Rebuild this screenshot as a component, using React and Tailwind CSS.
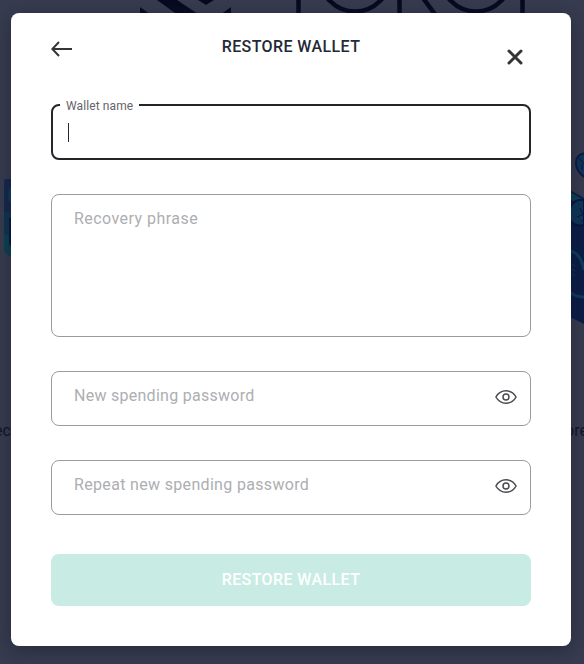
function Backdrop() {
  return (
    <svg className="absolute inset-0" width="584" height="664" viewBox="0 0 584 664" aria-hidden="true">
      <g fill="#060a20">
        <path d="M140 7 L149 13.500H140Z M157 0 H177 L204 18 H182Z M198 0 H214 L206 5Z M231 7 V13.500H222Z" />
      </g>
      <g fill="none" stroke="#060a20" strokeWidth="4.500">
        <path d="M298.500 0V14M399.500 0V14M423 -2 L435.500 15M522.500 0V14" />
        <circle cx="355" cy="-23.500" r="35" />
        <circle cx="476" cy="-23.500" r="35" />
      </g>
      <path d="M4 181q0-2 2-2h6v78q-8-3-8-11z" fill="#14284f" />
      <path d="M4 212h8v45q-8-3-8-11z" fill="#0f3550" />
      <path d="M12 185q-4 5-4 10t4 10z" fill="#0f3d58" />
      <path d="M4 235v11q0 8 8 11v-8q-3-3-3-14z" fill="#0b4352" />
      <path d="M12 218h-3v26l3 4z" fill="#071544" />
      <path d="M570 190l14 8v126l-14-7z" fill="#0a1d48" />
      <path d="M570 192l14 8v7l-14-8z" fill="#0b4352" />
      <path d="M586 153q-10 1-10 10t10 15z" fill="#10365a" stroke="#0a1a4a" strokeWidth="2" />
      <path d="M570 208q3-7 9-8h5v25q-9 2-14-5z" fill="#0e3658" stroke="#071544" strokeWidth="2" />
      <path d="M579 158l5 6m-2 0v6M580 208l4 9m-7 0 7-3m-3 8 3-3" stroke="#071544" fill="none" />
      <path d="M570 251q11 2 14 19M570 292q5 5 14 5" stroke="#0e3c5c" strokeWidth="3" fill="none" />
      <path d="M572 264l3 2m-3 3 3 2m-3 3 3 2" stroke="#0e3c5c" fill="none" />
    </svg>
  );
}

function Eye() {
  return (
    <svg width="22" height="14" viewBox="0 0 22 14" fill="none" stroke="#4a494d" strokeWidth="1.500">
      <path d="M.9 7C3.200 3 6.900.8 11 .8S18.800 3 21.100 7C18.800 11 15.100 13.200 11 13.200S3.200 11 .9 7Z" strokeLinejoin="round" />
      <circle cx="11" cy="7" r="3" />
    </svg>
  );
}

function PasswordField({ children }) {
  return (
    <div className="flex h-[55px] items-center justify-between rounded-lg border border-[#9b9b9d] pl-[22px] pr-[13px]">
      {children}
      <button aria-label="Show password" className="mt-[-3px]"><Eye /></button>
    </div>
  );
}

export default function App() {
  return (
    <div className="relative h-[664px] w-[584px] overflow-hidden bg-[#383c50] font-[Roboto,sans-serif] text-base leading-6">
      <Backdrop />
      <span className="absolute left-[-6px] top-[419px] text-[#11152b]">ec</span>
      <span className="absolute left-[565px] top-[419px] text-[#11152b]">ore</span>
      <main className="relative ml-[11px] mt-[13px] flex h-[633px] w-[560px] flex-col rounded-lg bg-white px-10 shadow-[0_4px_20px_rgba(20,24,36,0.5)]">
        <header className="flex h-[91px] items-start justify-between">
          <button aria-label="Back" className="mt-7 w-[21px]">
            <svg width="21" height="16" viewBox="0 0 21 16" fill="none" stroke="#353535" strokeWidth="2">
              <path d="M21 8H1.500M8 1 1.300 8 8 15" />
            </svg>
          </button>
          <h1 className="ml-[3px] mt-[22px] whitespace-nowrap font-medium tracking-[0.4px] text-[#242838]">RESTORE WALLET</h1>
          <button aria-label="Close" className="mr-2 mt-[36px]">
            <svg width="16" height="16" viewBox="0 0 16 16" stroke="#353535" strokeWidth="3" strokeLinecap="round">
              <path d="M2 2 14 14M14 2 2 14" />
            </svg>
          </button>
        </header>
        <div className="relative flex h-[56px] items-center rounded-lg border-2 border-[#242529] pl-[15px]">
          <span className="absolute left-[7px] top-[-8px] bg-white pl-[6px] pr-[6px] text-xs leading-4 tracking-[0.1px] text-[#656468]">Wallet name</span>
          <div className="h-[19px] w-px bg-[#242838]" />
        </div>
        <div className="mt-[34px] h-[143px] rounded-lg border border-[#9b9b9d] pl-[22px] pt-[12px]">
          <span className="tracking-[0.45px] text-[#adaeb2]">Recovery phrase</span>
        </div>
        <div className="mt-[34px]">
          <PasswordField><span className="mb-[6px] tracking-[0.27px] text-[#adaeb2]">New spending password</span></PasswordField>
        </div>
        <div className="mt-[34px]">
          <PasswordField><span className="mb-[6px] tracking-[0.33px] text-[#adaeb2]">Repeat new spending password</span></PasswordField>
        </div>
        <button className="mt-[39px] h-[52px] rounded-lg bg-[#c8ece3] pb-px font-medium tracking-[0.4px] text-white">RESTORE WALLET</button>
      </main>
    </div>
  );
}
